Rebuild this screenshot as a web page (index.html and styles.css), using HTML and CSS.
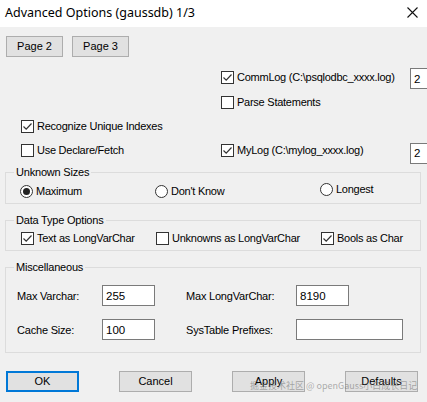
FILE: index.html
```
<!DOCTYPE html>
<html>
<head>
<meta charset="utf-8">
<link rel="stylesheet" href="styles.css">
</head>
<body>
<div class="window">
  <div class="titlebar">
    <span class="title">Advanced Options (gaussdb) 1/3</span>
    <svg class="close" width="11" height="11" viewBox="0 0 11 11"><path d="M0.5 0.5 L10.5 10.5 M10.5 0.5 L0.5 10.5" stroke="#111" stroke-width="1.1" fill="none"/></svg>
  </div>
  <div class="content">
    <div class="pages">
      <div class="btn">Page 2</div>
      <div class="btn">Page 3</div>
    </div>

    <div class="opts">
      <span></span>
      <div class="chk"><span class="box"><svg width="11" height="11" viewBox="0 0 11 11"><path d="M1.5 5.5 L4.2 8.2 L9.5 2.5" stroke="#333" stroke-width="1.2" fill="none"/></svg></span>CommLog (C:\psqlodbc_xxxx.log)</div>
      <div class="field num">2</div>

      <span></span>
      <div class="chk"><span class="box"></span>Parse Statements</div>
      <span></span>

      <div class="chk"><span class="box"><svg width="11" height="11" viewBox="0 0 11 11"><path d="M1.5 5.5 L4.2 8.2 L9.5 2.5" stroke="#333" stroke-width="1.2" fill="none"/></svg></span>Recognize Unique Indexes</div>
      <span></span>
      <span></span>

      <div class="chk"><span class="box"></span>Use Declare/Fetch</div>
      <div class="chk"><span class="box"><svg width="11" height="11" viewBox="0 0 11 11"><path d="M1.5 5.5 L4.2 8.2 L9.5 2.5" stroke="#333" stroke-width="1.2" fill="none"/></svg></span>MyLog (C:\mylog_xxxx.log)</div>
      <div class="field num low">2</div>
    </div>

    <fieldset class="group sizes">
      <legend>Unknown Sizes</legend>
      <div class="row3 radios">
        <div class="chk"><span class="radio on"></span>Maximum</div>
        <div class="chk"><span class="radio"></span>Don't Know</div>
        <div class="chk up"><span class="radio"></span>Longest</div>
      </div>
    </fieldset>

    <fieldset class="group types">
      <legend>Data Type Options</legend>
      <div class="row3 checks">
        <div class="chk"><span class="box"><svg width="11" height="11" viewBox="0 0 11 11"><path d="M1.5 5.5 L4.2 8.2 L9.5 2.5" stroke="#333" stroke-width="1.2" fill="none"/></svg></span>Text as LongVarChar</div>
        <div class="chk"><span class="box"></span>Unknowns as LongVarChar</div>
        <div class="chk"><span class="box"><svg width="11" height="11" viewBox="0 0 11 11"><path d="M1.5 5.5 L4.2 8.2 L9.5 2.5" stroke="#333" stroke-width="1.2" fill="none"/></svg></span>Bools as Char</div>
      </div>
    </fieldset>

    <fieldset class="group misc">
      <legend>Miscellaneous</legend>
      <div class="miscgrid">
        <span class="lbl">Max Varchar:</span>
        <div class="field w53">255</div>
        <span class="lbl">Max LongVarChar:</span>
        <div class="field w53">8190</div>
        <span class="lbl">Cache Size:</span>
        <div class="field w53">100</div>
        <span class="lbl">SysTable Prefixes:</span>
        <div class="field w107"></div>
      </div>
    </fieldset>

    <div class="actions">
      <div class="btn wide default">OK</div>
      <div class="btn wide">Cancel</div>
      <div class="btn wide">Apply</div>
      <div class="btn wide">Defaults</div>
    </div>
  </div>
  <div class="watermark">掘金技术社区 @ openGauss小白成长日记</div>
</div>
</body>
</html>
```
FILE: styles.css
```
* { box-sizing: border-box; }
html, body { margin: 0; padding: 0; }
body {
  width: 427px;
  height: 402px;
  overflow: hidden;
  background: #f0f0f0;
  font-family: "Liberation Sans", Arial, sans-serif;
  font-size: 11px;
  color: #000;
}
.window { position: relative; width: 427px; height: 402px; overflow: hidden; }
.titlebar {
  height: 27px;
  background: #fff;
  display: flex;
  align-items: center;
  justify-content: space-between;
  padding: 0 9px 2px 5px;
}
.title { font-family: "Noto Sans", sans-serif; font-size: 12.5px; color: #000; }
.close { display: block; }
.content { padding-top: 9px; }
.pages { display: flex; gap: 9px; padding-left: 6px; }
.btn {
  width: 57px;
  height: 21px;
  background: #e1e1e1;
  border: 1px solid #adadad;
  display: flex;
  align-items: center;
  justify-content: center;
  font-size: 11px;
  line-height: 1;
}
.btn.wide { width: 73px; }
.btn.default { border: 2px solid #0078d7; }

.opts {
  display: grid;
  grid-template-columns: 200px 189px 40px;
  grid-template-rows: 26px 24px 24px 24px;
  align-items: center;
  padding-left: 21px;
  margin-top: 7px;
}
.chk { display: flex; align-items: center; gap: 3px; white-space: nowrap; line-height: 13px; letter-spacing: -0.25px; }
.lbl { letter-spacing: -0.2px; }
.box {
  width: 13px; height: 13px;
  border: 1px solid #333;
  background: #fff;
  display: flex; align-items: center; justify-content: center;
  flex: none;
}
.box svg { display: block; }
.radio {
  width: 13px; height: 13px;
  border: 1px solid #333;
  border-radius: 50%;
  background: #fff;
  flex: none;
  display: flex; align-items: center; justify-content: center;
}
.radio.on::after {
  content: "";
  width: 7px; height: 7px;
  border-radius: 50%;
  background: #222;
}
.field {
  height: 21px;
  background: #fff;
  border: 1px solid #7a7a7a;
  padding-left: 3px;
  display: flex;
  align-items: center;
  font-size: 11.5px;
}
.num { width: 30px; margin-top: 3px; }
.num.low { margin-top: 6px; }
.group {
  margin: 0 0 0 5px;
  width: 416px;
  border: 1px solid #dcdcdc;
  padding: 0;
  min-width: 0;
}
.group legend {
  margin-left: 8px;
  padding: 0 2px;
  font-size: 11px;
  line-height: 13px;
  letter-spacing: -0.2px;
}
.sizes { margin-top: 4px; }
.row3 {
  display: grid;
  grid-template-columns: 135px 165px auto;
  align-items: center;
}
.radios { height: 24px; padding-left: 14px; }
.up { margin-top: -3px; }
.types { margin-top: 10px; }
.checks { height: 23px; padding-left: 15px; }
.misc { margin-top: 10px; }
.miscgrid {
  display: grid;
  grid-template-columns: 85px 84px 110px auto;
  grid-template-rows: 21px 21px;
  row-gap: 13px;
  align-items: center;
  padding: 11px 0 12px 11px;
}
.w53 { width: 53px; }
.w107 { width: 107px; }
.actions {
  display: flex;
  gap: 40px;
  padding-left: 6px;
  margin-top: 18px;
}
.watermark {
  position: absolute;
  left: 250px;
  top: 379px;
  font-family: "Noto Sans CJK SC", "Noto Sans", sans-serif;
  font-size: 9px;
  color: rgba(110, 110, 110, 0.55);
  white-space: nowrap;
}
```
